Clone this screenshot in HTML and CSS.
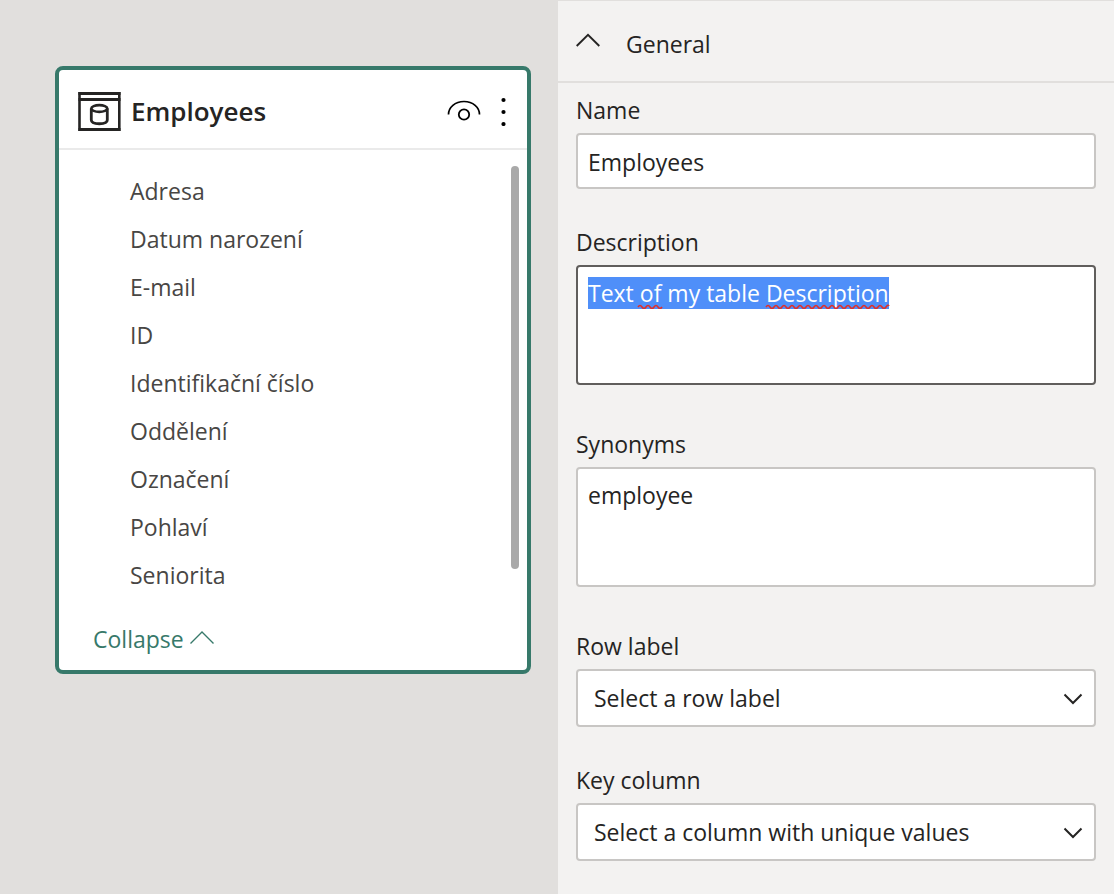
FILE: index.html
```html
<!DOCTYPE html>
<html lang="en">
<head>
<meta charset="utf-8">
<title>Model view - Employees</title>
<link rel="stylesheet" href="styles.css">
</head>
<body>
<div class="app">
  <main class="canvas">
    <section class="card" aria-labelledby="table-name">
      <header class="card-header">
        <svg class="table-icon" width="44" height="40" viewBox="0 0 44 40" fill="none" stroke="#252423" aria-hidden="true">
          <path d="M1.500 2.500H43.500M1.500 8.500H43.500M1.500 38.500H43.500" stroke-width="3"/>
          <path d="M2.500 1V40M42.300 1V40" stroke-width="2.600"/>
          <ellipse cx="22.300" cy="17.500" rx="8" ry="3.400" stroke-width="2.600"/>
          <path d="M14.300 17.500V29C14.300 34 30.300 34 30.300 29V17.500" stroke-width="2.800"/>
        </svg>
        <h1 class="card-title" id="table-name">Employees</h1>
        <button class="icon-button" type="button" aria-label="Hide table">
          <svg width="34" height="24" viewBox="0 0 34 24" fill="none" stroke="#000" aria-hidden="true">
            <path d="M1.500 15.500C1.500 8.500 8 2.500 17 2.500S32.500 8.500 32.500 15.500" stroke-width="1.700"/>
            <circle cx="17" cy="15.500" r="5.200" stroke-width="1.800"/>
          </svg>
        </button>
        <button class="icon-button" type="button" aria-label="More options">
          <svg width="8" height="30" viewBox="0 0 8 30" fill="#000" aria-hidden="true">
            <circle cx="4.500" cy="4" r="2.100"/><circle cx="4.500" cy="16" r="2.100"/><circle cx="4.500" cy="28" r="2.100"/>
          </svg>
        </button>
      </header>
      <div class="card-body">
        <ul class="columns">
          <li>Adresa</li>
          <li>Datum narození</li>
          <li>E-mail</li>
          <li>ID</li>
          <li>Identifikační číslo</li>
          <li>Oddělení</li>
          <li>Označení</li>
          <li>Pohlaví</li>
          <li>Seniorita</li>
        </ul>
        <div class="scroll-track"><div class="scroll-thumb"></div></div>
      </div>
      <button class="collapse" type="button">Collapse
        <svg width="24" height="16" viewBox="0 0 24 16" fill="none" stroke="currentColor" stroke-width="1.400" aria-hidden="true"><path d="M.5 12.500L12 1L23.500 12.500"/></svg>
      </button>
    </section>
  </main>

  <aside class="panel">
    <button class="section-toggle" type="button" aria-expanded="true">
      <svg width="24" height="14" viewBox="0 0 24 14" fill="none" stroke="currentColor" stroke-width="1.900" aria-hidden="true"><path d="M.7 13L12 1.800L23.300 13"/></svg>
      General
    </button>
    <form class="fields">
      <div class="field">
        <label for="name">Name</label>
        <input class="box" id="name" type="text" value="Employees">
      </div>
      <div class="field field-area">
        <label for="description">Description</label>
        <div class="spelled">
          <textarea class="box active" id="description" spellcheck="false">Text of my table Description</textarea>
          <svg class="squiggles" width="304" height="5" fill="none" stroke="#e0302a" stroke-width="1.600" aria-hidden="true">
            <path d="M50 3q2-3 4 0t4 0t4 0t4 0t4 0t4 0"/>
            <path d="M178 3q2-3 4 0t4 0t4 0t4 0t4 0t4 0t4 0t4 0t4 0t4 0t4 0t4 0t4 0t4 0t4 0t4 0t4 0t4 0t4 0t4 0t4 0t4 0t4 0t4 0t4 0t4 0t4 0t4 0t4 0t4 0t3-1"/>
          </svg>
        </div>
      </div>
      <div class="field field-area">
        <label for="synonyms">Synonyms</label>
        <textarea class="box" id="synonyms" spellcheck="false">employee</textarea>
      </div>
      <div class="field">
        <label for="row-label">Row label</label>
        <div class="select-wrap">
          <select class="box" id="row-label"><option>Select a row label</option></select>
          <svg class="chevron" width="20" height="12" viewBox="0 0 20 12" aria-hidden="true"><path d="M1.500 1.500L10 10L18.500 1.500"/></svg>
        </div>
      </div>
      <div class="field">
        <label for="key-column">Key column</label>
        <div class="select-wrap">
          <select class="box" id="key-column"><option>Select a column with unique values</option></select>
          <svg class="chevron" width="20" height="12" viewBox="0 0 20 12" aria-hidden="true"><path d="M1.500 1.500L10 10L18.500 1.500"/></svg>
        </div>
      </div>
    </form>
  </aside>
</div>
<script src="main.js"></script>
</body>
</html>
```

FILE: styles.css
```css
* { box-sizing: border-box; }

body {
  margin: 0;
  color: #252423;
  font: 23px/32px "Segoe UI", "Open Sans", "Noto Sans", sans-serif;
}

button, input, select, textarea { font: inherit; color: inherit; }
button { border: 0; background: none; padding: 0; cursor: pointer; }
svg { display: block; flex: none; }

.app {
  display: grid;
  grid-template-columns: minmax(0, 1fr) 556px;
  min-height: 100vh;
}

.canvas {
  padding: 66px 27px 66px 55px;
  background: #e1dfdd;
}

.card {
  border: 4px solid #37796a;
  border-radius: 8px;
  background: #fff;
}

.card-header {
  display: flex;
  align-items: center;
  gap: 18px;
  height: 80px;
  padding: 4px 20px 0 18px;
  border-bottom: 2px solid #eaeaea;
}

.card-title {
  flex: 1;
  margin: 0 0 0 -8px;
  font-size: 26px;
  font-weight: 600;
}

.card-body { display: flex; padding-top: 16px; }

.columns {
  flex: 1;
  margin: 0;
  padding: 1px 0 0 71px;
  list-style: none;
  color: #484644;
  line-height: 48px;
}

.scroll-track { width: 8px; margin-right: 8px; }
.scroll-thumb { height: 403px; border-radius: 4px; background: #a9a9a9; }

.collapse {
  display: flex;
  align-items: center;
  gap: 6px;
  margin: 16px 0 7px 34px;
  color: #37796a;
  line-height: 48px;
}

.panel {
  border-top: 1px solid #e1dfdd;
  background: #f3f2f1;
}

.section-toggle {
  display: flex;
  align-items: center;
  gap: 26px;
  width: 100%;
  height: 82px;
  padding: 6px 18px 0;
  border-bottom: 2px solid #e1dfdd;
}
.section-toggle svg { margin-bottom: 8px; }

.fields { padding: 12px 18px 34px; }
.field { display: flex; flex-direction: column; gap: 8px; margin-bottom: 38px; }
.field label { line-height: 30px; }
.field-area { margin-bottom: 44px; }

.box {
  display: block;
  width: 100%;
  height: 56px;
  padding: 2px 10px 0;
  border: 2px solid #c8c6c4;
  border-radius: 4px;
  background: #fff;
  outline: 0;
}
textarea.box { height: 120px; padding: 10px; resize: none; }
.box.active { border-color: #605e5c; }
.box::selection { background: #4f8ff9; color: #fff; }

.spelled, .select-wrap { position: relative; }
.squiggles { position: absolute; left: 12px; top: 39px; pointer-events: none; }

select.box { height: 58px; padding: 0 48px 0 16px; appearance: none; }
.chevron {
  position: absolute;
  right: 13px;
  top: 24px;
  fill: none;
  stroke: #252423;
  stroke-width: 2;
  pointer-events: none;
}
```

FILE: main.js
```js
const description = document.getElementById("description");
description.focus();
description.select();
```
